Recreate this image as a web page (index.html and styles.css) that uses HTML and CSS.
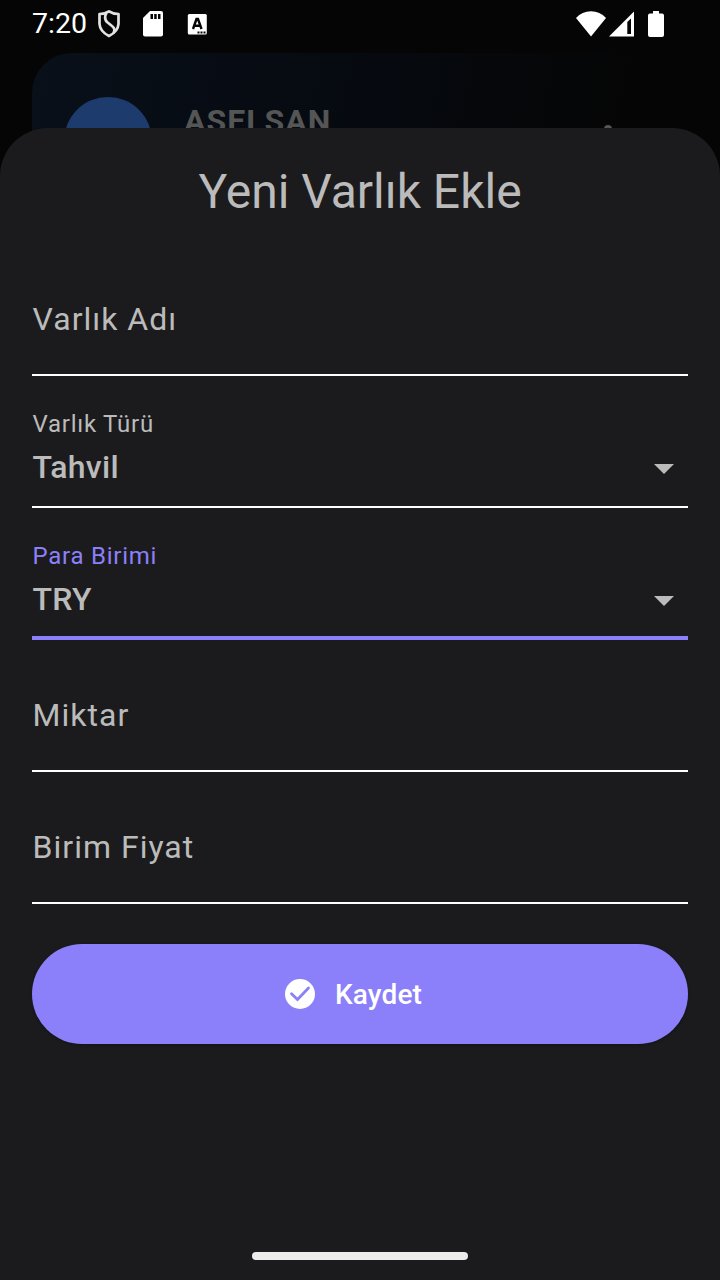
FILE: index.html
```html
<!DOCTYPE html>
<html lang="tr">
<head>
<meta charset="utf-8">
<title>Yeni Varlık Ekle</title>
<link rel="stylesheet" href="styles.css">
</head>
<body>
<div class="screen">
  <header class="status">
    <span class="clock">7:20</span>
    <svg class="shield" width="24" height="30" viewBox="0 0 24 30" fill="none" stroke="#e2e2e2" stroke-width="2.700" stroke-linejoin="round">
      <path d="M12 2.300Q16 5 21.500 5V15Q21 22.500 12 27Q3 22.500 2.500 15V5Q8 5 12 2.300Z"/>
      <path d="M9.500 3.800Q6.500 9 10 13L15 17Q19 20 16.500 24"/>
    </svg>
    <svg class="sd" width="20" height="26" viewBox="0 0 20 26">
      <path fill="#fff" d="M7 0H18Q20 0 20 2V23.500Q20 25.500 18 25.500H2Q0 25.500 0 23.500V7Z"/>
      <path fill="#050505" d="M7.500 3h2.500v5H7.500zM11.200 3h2.500v5H11.200zM15 3h2.500v5H15z"/>
    </svg>
    <svg class="abox" width="20" height="21" viewBox="0 0 20 21">
      <rect width="19" height="20.500" x=".8" rx="1.500" fill="#fff"/>
      <path fill="none" stroke="#050505" stroke-width="2.400" d="M6 15L9.500 5H11L14.500 15M7.500 11.800H13"/>
      <path fill="#050505" d="M10.500 17.500h2v2h-2zM13.500 17.500h2v2h-2zM16.500 17.500h2v2h-2z"/>
    </svg>
    <span class="spacer"></span>
    <svg class="wifi" width="30" height="26" viewBox="0 0 30 26"><path fill="#fff" d="M15 25.500L0 7Q6 .3 15 .3T30 7Z"/></svg>
    <svg class="signal" width="26" height="26" viewBox="0 0 26 26"><path fill="#fff" fill-rule="evenodd" d="M25 .5V25.500H0ZM22 7.500L18.300 11V23H22Z"/></svg>
    <svg class="battery" width="16" height="27" viewBox="0 0 16 27"><path fill="#fff" d="M5 0h6v2.500h3q2 0 2 2V24q0 2-2 2H2q-2 0-2-2V4.500q0-2 2-2h3z"/></svg>
  </header>
  <section class="asset">
    <span class="avatar"></span>
    <span class="asset-name">ASELSAN</span>
    <span class="more"></span>
  </section>
  <main class="sheet">
    <h1 class="title">Yeni Varlık Ekle</h1>
    <form class="form">
      <div class="field"><span class="hint">Varlık Adı</span></div>
      <div class="field filled">
        <div class="texts"><span class="label">Varlık Türü</span><span class="value">Tahvil</span></div>
        <svg class="arrow" width="20" height="10" viewBox="0 0 20 10"><path d="M0 0H20L10 10Z"/></svg>
      </div>
      <div class="field filled active">
        <div class="texts"><span class="label">Para Birimi</span><span class="value">TRY</span></div>
        <svg class="arrow" width="20" height="10" viewBox="0 0 20 10"><path d="M0 0H20L10 10Z"/></svg>
      </div>
      <div class="field"><span class="hint">Miktar</span></div>
      <div class="field"><span class="hint">Birim Fiyat</span></div>
      <button class="save" type="button">
        <svg width="30" height="30" viewBox="0 0 30 30"><circle cx="15" cy="15" r="15" fill="#fff"/><path d="M6.500 14.700L12.500 20.500L23.500 9" fill="none" stroke="#8b80fa" stroke-width="2.800" stroke-linecap="round"/></svg>
        <span class="save-text">Kaydet</span>
      </button>
    </form>
    <div class="home"></div>
  </main>
</div>
</body>
</html>
```
FILE: styles.css
```css
* { box-sizing: border-box; }
body { margin: 0; background: #050505; font-family: Roboto, sans-serif; }
.screen { width: 720px; height: 1280px; overflow: hidden; display: flex; flex-direction: column; background: #050505; }
.status { height: 53px; flex: none; display: flex; align-items: flex-start; padding: 0 56px 0 32px; color: #fff; }
.clock { width: 65px; font-size: 28.500px; line-height: 34px; padding-top: 7px; white-space: nowrap; }
.shield { margin-top: 9px; }
.sd { margin: 11px 0 0 22px; }
.abox { margin: 14px 0 0 24px; }
.spacer { flex: 1; }
.wifi { margin-top: 11px; }
.signal { margin: 11px 0 0 3px; }
.battery { margin: 11px 0 0 13px; }
.asset { height: 160px; flex: none; margin: 0 32px -85px; padding: 44px 76px 0 32px; border-radius: 40px; display: flex; background: linear-gradient(103deg, #091019, #060a11 45%, #050505 88%); }
.avatar { width: 88px; height: 88px; border-radius: 50%; background: #1d3b6c; }
.asset-name { margin: 5px 0 0 32px; font-size: 32px; line-height: 38px; font-weight: 700; letter-spacing: 1px; color: #555; }
.more { width: 8px; height: 8px; border-radius: 50%; background: #555; margin: 28px 0 0 auto; }
.sheet { position: relative; flex: 1; display: flex; flex-direction: column; padding: 32px 32px 20px; border-radius: 48px 48px 0 0; background: #1b1b1d; }
.title { margin: 0 0 40px; font-size: 48px; line-height: 64px; font-weight: 400; text-align: center; color: #bbb; }
.form { display: flex; flex-direction: column; gap: 20px; }
.field { height: 112px; display: flex; align-items: center; border-bottom: 2px solid #fff; color: #bbb; }
.hint { padding-left: .6px; font-size: 32px; line-height: 48px; letter-spacing: 1px; }
.filled { align-items: flex-start; justify-content: space-between; padding: 12px 14px 0 0; }
.texts { display: flex; flex-direction: column; padding-left: .5px; }
.label { font-size: 24px; line-height: 32px; letter-spacing: .75px; }
.value { font-size: 32px; line-height: 48px; font-weight: 500; letter-spacing: .3px; margin-top: 3px; }
.arrow { fill: #bbb; margin-top: 56px; }
.active { border-bottom: 4px solid #8b80fa; }
.active .label { color: #8b80fa; }
.save { height: 100px; margin: 20px 0 0; padding: 0 13px 0 0; border: 0; border-radius: 50px; background: #8b80fa; color: #fff; font: 500 28px/40px Roboto, sans-serif; letter-spacing: .15px; display: flex; align-items: center; justify-content: center; gap: 20px; box-shadow: 0 1px 3px rgba(0,0,0,.3); }
.save-text { padding-top: 2px; }
.home { width: 216px; height: 8px; border-radius: 4px; background: #ececec; margin: auto auto 0; }
```
